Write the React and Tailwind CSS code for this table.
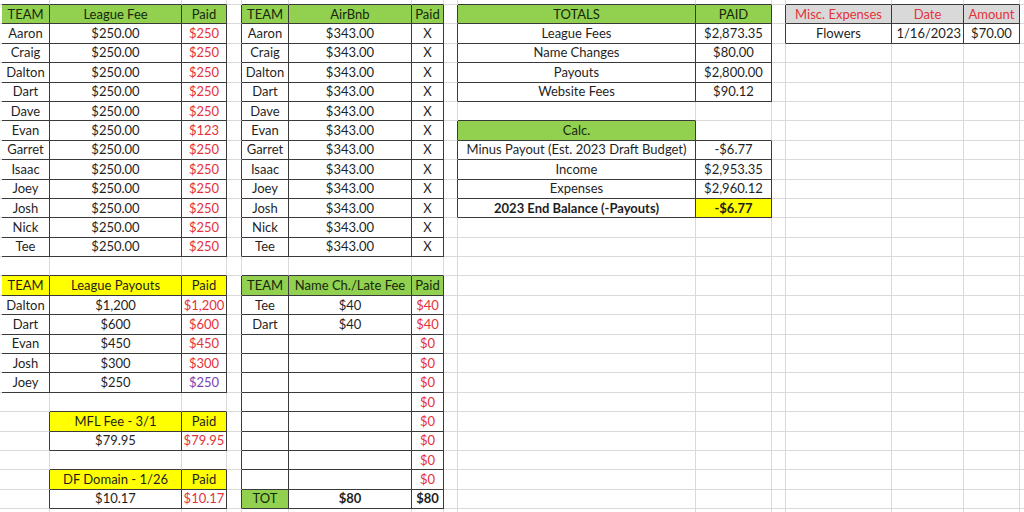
import React from 'react';

const RED = 'red';
const NROWS = 27;
const NCOLS = 15;

// cell map: key "row,col" (row 1 = first sheet row, col 1 = first column)
const cells = {};
const put = (r, c, t, opts = {}) => {
  cells[`${r},${c}`] = { t, ...opts };
};

// League fee table
const names = ['Aaron', 'Craig', 'Dalton', 'Dart', 'Dave', 'Evan', 'Garret', 'Isaac', 'Joey', 'Josh', 'Nick', 'Tee'];
put(1, 1, 'TEAM', { bg: 'green' });
put(1, 2, 'League Fee', { bg: 'green' });
put(1, 3, 'Paid', { bg: 'green' });
names.forEach((n, i) => {
  put(i + 2, 1, n);
  put(i + 2, 2, '$250.00');
  put(i + 2, 3, n === 'Evan' ? '$123' : '$250', { color: RED });
});

// AirBnb table
put(1, 5, 'TEAM', { bg: 'green' });
put(1, 6, 'AirBnb', { bg: 'green' });
put(1, 7, 'Paid', { bg: 'green' });
names.forEach((n, i) => {
  put(i + 2, 5, n);
  put(i + 2, 6, '$343.00');
  put(i + 2, 7, 'X');
});

// Totals
put(1, 9, 'TOTALS', { bg: 'green' });
put(1, 10, 'PAID', { bg: 'green' });
[
  ['League Fees', '$2,873.35'],
  ['Name Changes', '$80.00'],
  ['Payouts', '$2,800.00'],
  ['Website Fees', '$90.12'],
].forEach(([a, b], i) => {
  put(i + 2, 9, a);
  put(i + 2, 10, b);
});

// Calc
put(7, 9, 'Calc.', { bg: 'green' });
put(8, 9, 'Minus Payout (Est. 2023 Draft Budget)');
put(8, 10, '-$6.77');
put(9, 9, 'Income');
put(9, 10, '$2,953.35');
put(10, 9, 'Expenses');
put(10, 10, '$2,960.12');
put(11, 9, '2023 End Balance (-Payouts)', { bold: true });
put(11, 10, '-$6.77', { bold: true, bg: 'yellow' });

// Misc expenses
put(1, 12, 'Misc. Expenses', { bg: 'gray', color: RED });
put(1, 13, 'Date', { bg: 'gray', color: RED });
put(1, 14, 'Amount', { bg: 'gray', color: RED });
put(2, 12, 'Flowers');
put(2, 13, '1/16/2023', { align: 'right' });
put(2, 14, '$70.00');

// League payouts
put(15, 1, 'TEAM', { bg: 'yellow' });
put(15, 2, 'League Payouts', { bg: 'yellow' });
put(15, 3, 'Paid', { bg: 'yellow' });
[
  ['Dalton', '$1,200'],
  ['Dart', '$600'],
  ['Evan', '$450'],
  ['Josh', '$300'],
  ['Joey', '$250'],
].forEach(([n, v], i) => {
  put(i + 16, 1, n);
  put(i + 16, 2, v);
  put(i + 16, 3, v, { color: n === 'Joey' ? 'purple' : RED });
});

// MFL + DF Domain
put(22, 2, 'MFL Fee - 3/1', { bg: 'yellow' });
put(22, 3, 'Paid', { bg: 'yellow' });
put(23, 2, '$79.95');
put(23, 3, '$79.95', { color: RED });
put(25, 2, 'DF Domain - 1/26', { bg: 'yellow' });
put(25, 3, 'Paid', { bg: 'yellow' });
put(26, 2, '$10.17');
put(26, 3, '$10.17', { color: RED });

// Name changes
put(15, 5, 'TEAM', { bg: 'green' });
put(15, 6, 'Name Ch./Late Fee', { bg: 'green' });
put(15, 7, 'Paid', { bg: 'green' });
put(16, 5, 'Tee');
put(16, 6, '$40');
put(16, 7, '$40', { color: RED });
put(17, 5, 'Dart');
put(17, 6, '$40');
put(17, 7, '$40', { color: RED });
for (let r = 18; r <= 25; r++) {
  put(r, 5, '');
  put(r, 6, '');
  put(r, 7, '$0', { color: RED });
}
put(26, 5, 'TOT', { bg: 'green' });
put(26, 6, '$80', { bold: true });
put(26, 7, '$80', { bold: true });

const inTable = (r, c) => cells[`${r},${c}`] !== undefined;

function Cell({ r, c }) {
  const cell = cells[`${r},${c}`];
  const darkR = inTable(r, c) || inTable(r, c + 1);
  const darkB = inTable(r, c) || inTable(r + 1, c);

  let bg = 'bg-white';
  if (cell?.bg === 'green') bg = 'bg-[#92d050]';
  if (cell?.bg === 'yellow') bg = 'bg-[#ffff00]';
  if (cell?.bg === 'gray') bg = 'bg-[#d9d9d9]';

  let color = 'text-[#1f1f1f]';
  if (cell?.color === RED) color = 'text-[#e5323a]';
  if (cell?.color === 'purple') color = 'text-[#7b3fb0]';
  if (cell?.bg === 'green' && !cell?.color) color = 'text-[#14280c]';

  return (
    <div
      className={[
        'flex items-center overflow-hidden whitespace-nowrap border-r border-b px-[2px] text-[13px] leading-none',
        darkR ? 'border-r-[#3a3a3a]' : 'border-r-[#dadada]',
        darkB ? 'border-b-[#3a3a3a]' : 'border-b-[#dadada]',
        cell?.align === 'right' ? 'justify-end' : 'justify-center',
        cell?.bold ? 'font-bold' : 'font-normal',
        bg,
        color,
      ].join(' ')}
    >
      {cell?.t}
    </div>
  );
}

export default function App() {
  const rows = [];
  for (let r = 0; r <= NROWS; r++) {
    for (let c = 0; c <= NCOLS; c++) {
      rows.push(<Cell key={`${r}-${c}`} r={r} c={c} />);
    }
  }

  return (
    <div className="h-[512px] w-[1024px] overflow-hidden bg-white font-['Lato','Liberation_Sans',sans-serif]">
      <div className="grid grid-cols-[2px_48px_132px_45px_15px_47px_123px_32px_14px_238px_76px_14px_106px_72px_56px_1fr] grid-rows-[5px_repeat(27,19.4px)]">
        {rows}
      </div>
    </div>
  );
}
